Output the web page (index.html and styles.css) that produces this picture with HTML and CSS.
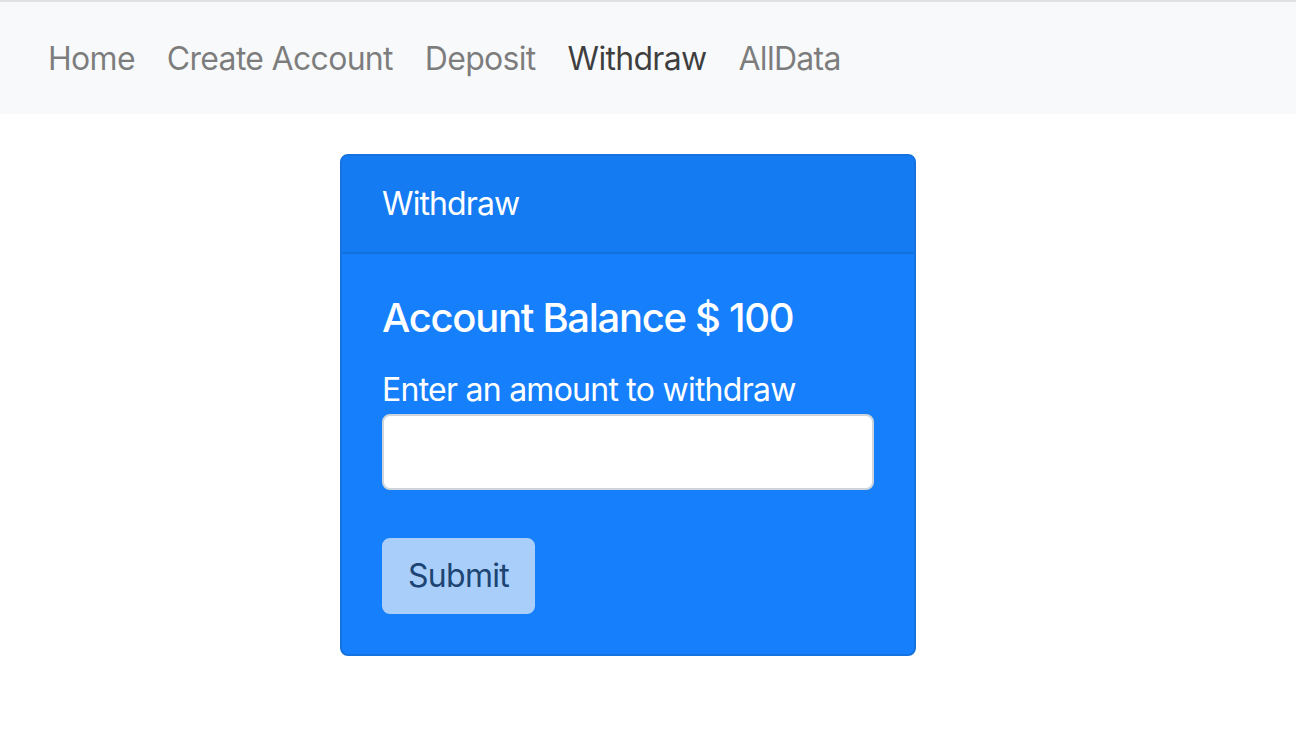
FILE: index.html
```html
<!DOCTYPE html>
<html lang="en">
<head>
<meta charset="utf-8">
<title>Withdraw</title>
<link rel="stylesheet" href="styles.css">
</head>
<body>
<div class="topline"></div>
<nav class="navbar">
  <a class="nav-link" href="#">Home</a>
  <a class="nav-link" href="#">Create Account</a>
  <a class="nav-link" href="#">Deposit</a>
  <a class="nav-link active" href="#">Withdraw</a>
  <a class="nav-link" href="#">AllData</a>
</nav>
<main class="content">
  <div class="card">
    <div class="card-header">Withdraw</div>
    <div class="card-body">
      <h5 class="card-title">Account Balance $ 100</h5>
      <label class="label" for="amount">Enter an amount to withdraw</label>
      <input class="form-control" id="amount" type="text">
      <div class="spacer"></div>
      <button class="btn" type="submit" disabled>Submit</button>
    </div>
  </div>
</main>
</body>
</html>
```

FILE: styles.css
```css
* { box-sizing: border-box; }
html, body { margin: 0; padding: 0; }
body {
  font-family: Inter, "Noto Sans", "Liberation Sans", sans-serif;
  font-size: 32px;
  line-height: 1.5;
  color: #212529;
  background: #fff;
}
.topline { height: 2px; background: #dfe1e4; }
.navbar {
  display: flex;
  align-items: center;
  background: #f8f9fa;
  padding: 17px 32px 15px;
  height: 112px;
}
.nav-link {
  display: block;
  padding: 8px 16px;
  color: rgba(0,0,0,0.5);
  text-decoration: none;
  letter-spacing: -0.7px;
}
.nav-link.active { color: rgba(0,0,0,0.75); }
.content {
  padding: 40px 0 0 340px;
}
.card {
  width: 576px;
  background: #167ffb;
  border: 2px solid #1473e0;
  border-radius: 8px;
  color: #fff;
  overflow: hidden;
}
.card-header {
  padding: 24px 40px;
  line-height: 48px;
  background: #157bf3;
  border-bottom: 2px solid #1470dc;
  letter-spacing: -0.9px;
}
.card-body { padding: 40px 40px; }
.card-title {
  margin: 0 0 24px;
  font-size: 40px;
  line-height: 48px;
  font-weight: 500;
  letter-spacing: -1.3px;
}
.label {
  display: block;
  line-height: 48px;
  letter-spacing: -0.75px;
}
.form-control {
  display: block;
  width: 100%;
  height: 76px;
  border: 2px solid #ced4da;
  border-radius: 8px;
  background: #fff;
  font: inherit;
  padding: 12px 24px;
}
.spacer { height: 48px; }
.btn {
  display: block;
  font: inherit;
  letter-spacing: -0.7px;
  line-height: 48px;
  padding: 12px 24px;
  border: 2px solid #f8f9fa;
  border-radius: 8px;
  background: #f8f9fa;
  color: #212529;
  opacity: 0.65;
}
```
